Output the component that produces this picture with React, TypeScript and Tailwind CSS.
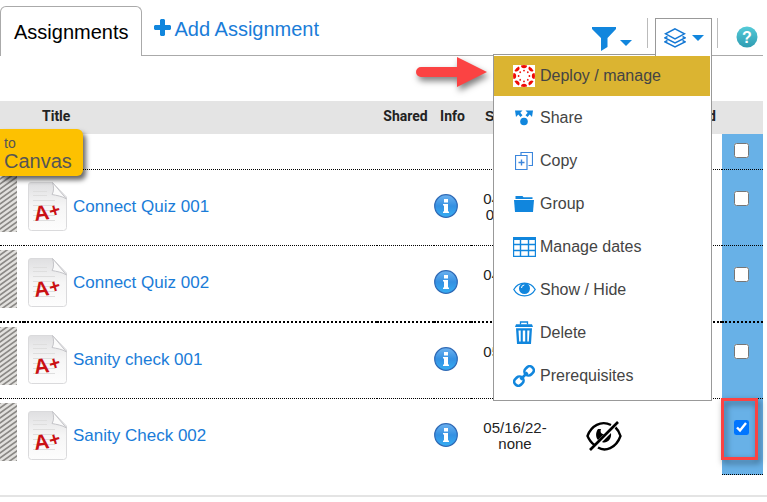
import { useState } from "react";
import type { ReactNode } from "react";

const BLUE = "#1186dd";

function Caret() {
  return (
    <svg className="h-[6px] w-[12px] shrink-0" viewBox="0 0 12 6" aria-hidden="true">
      <path d="M0 0h12L6 6z" fill={BLUE} />
    </svg>
  );
}

function PlusIcon() {
  return (
    <svg className="mb-1 h-[17px] w-[17px]" viewBox="0 0 17 17" aria-hidden="true">
      <path d="M7 0h3l1 1v5h5l1 1v3l-1 1h-5v5l-1 1H7l-1-1v-5H1l-1-1V7l1-1h5V1z" fill={BLUE} />
    </svg>
  );
}

function LayersIcon() {
  return (
    <svg className="h-5 w-[22px]" viewBox="0 0 22 20" fill="none" stroke="#1478d4" strokeWidth="1.5" aria-hidden="true">
      <path d="M11 .8 20.500 5.800 11 10.800 1.500 5.800z" />
      <path d="M3.500 8.500 1 9.800l10 5.200 10-5.200-2.500-1.300" />
      <path d="M3.500 12.500 1 13.800l10 5.200 10-5.200-2.500-1.300" />
    </svg>
  );
}

function HelpIcon() {
  return (
    <svg className="h-[22px] w-[22px]" viewBox="0 0 22 22" aria-hidden="true">
      <defs>
        <linearGradient id="help" x1="0" y1="0" x2="0" y2="1">
          <stop offset="0" stopColor="#55cbd8" />
          <stop offset="1" stopColor="#2f9cb2" />
        </linearGradient>
      </defs>
      <circle cx="11" cy="11" r="10.5" fill="url(#help)" />
      <text x="11" y="16.500" textAnchor="middle" fontSize="16" fontWeight="700" fill="#fff">?</text>
    </svg>
  );
}

function CanvasLogo() {
  const spokes = [0, 45, 90, 135, 180, 225, 270, 315];
  return (
    <svg className="h-[22px] w-[22px]" viewBox="0 0 22 22" aria-hidden="true">
      <path d="M0 0h22v22H0z" fill="#fff" />
      {spokes.map((angle) => (
        <g key={angle} transform={`rotate(${angle} 11 11)`} fill="#f00a05">
          <path d="M8 .500a11 11 0 0 1 6 0 3 2.700 0 0 1-6 0z" />
          <circle cx="11" cy="5.600" r="0.900" />
        </g>
      ))}
    </svg>
  );
}

function ShareIcon() {
  return (
    <svg className="h-4 w-[18px]" viewBox="0 0 18 16" aria-hidden="true">
      <g fill={BLUE}>
        <circle cx="9" cy="11.500" r="3.800" />
        <path d="M0 .5h7.500L5.300 2.700l2.200 2.600-2 1.800-2.200-2.500L1 7z" />
        <path d="M18 .5h-7.500l2.200 2.200-2.200 2.600 2 1.800 2.200-2.500L17 7z" />
      </g>
    </svg>
  );
}

function CopyIcon() {
  return (
    <svg className="h-[18px] w-[18px]" viewBox="0 0 18 18" fill="none" stroke="#3b86dc" aria-hidden="true">
      <path d="M6 3V.5h11.500v13H13.500" strokeWidth="1.200" />
      <path d="M.5 3.500h11.500v14H.5z" strokeWidth="1.200" />
      <path d="M6.500 7.500v6M3.500 10.500h6" strokeWidth="1.400" />
    </svg>
  );
}

function FolderIcon() {
  return (
    <svg className="h-4 w-5" viewBox="0 0 20 16" fill={BLUE} aria-hidden="true">
      <path d="M1.500 0h7l1 1.300h9V3h-17z" />
      <path d="M0 4h20l-1 12H1z" />
    </svg>
  );
}

function GridIcon() {
  return (
    <svg className="h-5 w-[23px]" viewBox="0 0 23 20" aria-hidden="true">
      <path d="M0 0h23v3H0z" fill={BLUE} />
      <path d="M.5.5h22v19H.5zM0 7.500h23M0 13.500h23M7.500 0v20M15.500 0v20" fill="none" stroke={BLUE} strokeWidth="1.400" />
    </svg>
  );
}

function EyeIcon() {
  return (
    <svg className="h-[15px] w-[23px]" viewBox="0 0 23 15" aria-hidden="true">
      <path d="M.8 7.500C5.500-1 17.500-1 22.200 7.500 17.500 16 5.500 16 .8 7.500z" fill="none" stroke={BLUE} strokeWidth="1.300" />
      <circle cx="11.500" cy="6.500" r="5.500" fill={BLUE} />
      <path d="M8.500 6a3 3 0 0 1 2.800-3" fill="none" stroke="#fff" />
    </svg>
  );
}

function TrashIcon() {
  return (
    <svg className="h-[23px] w-[18px]" viewBox="0 0 18 23" aria-hidden="true">
      <path d="M5.500 3.500V1h7v2.500" fill="none" stroke={BLUE} strokeWidth="1.300" />
      <path d="M1 3.200h16L18 6H0zM1 7.300h16L16 23H2z" fill={BLUE} />
      <path d="M3.500 9.500h2.200v11H4.200zM7.800 9.500h2.400v11H7.800zM12.300 9.500h2.200l-.7 11h-1.500z" fill="#fff" />
    </svg>
  );
}

function ChainIcon() {
  return (
    <svg className="h-[22px] w-[22px]" viewBox="0 0 22 22" fill="none" stroke={BLUE} strokeWidth="2.600" aria-hidden="true">
      <g transform="rotate(-45 11 11)">
        <rect x="-1" y="7" width="9.500" height="8" rx="3.600" />
        <rect x="13.500" y="7" width="9.500" height="8" rx="3.600" />
        <path d="M6 11h10" />
      </g>
    </svg>
  );
}

function InfoIcon() {
  return (
    <svg className="h-6 w-6" viewBox="0 0 24 24" aria-hidden="true">
      <defs>
        <linearGradient id="info" x1="0" y1="0" x2="0" y2="1">
          <stop offset="0" stopColor="#6db2f0" />
          <stop offset="0.5" stopColor="#3490e2" />
          <stop offset="1" stopColor="#36aef3" />
        </linearGradient>
      </defs>
      <circle cx="12" cy="12" r="11.300" fill="url(#info)" stroke="#2f69b5" strokeWidth="1.200" />
      <path d="M10 5h4v3.500h-4zM9 10h5v7.500h1V19H9v-1.500h1v-6H9z" fill="#fff" />
    </svg>
  );
}

function Hatch() {
  return (
    <svg className="h-[58px] w-[17px]" aria-hidden="true">
      <defs>
        <pattern id="hatch" width="7" height="5" patternUnits="userSpaceOnUse">
          <path d="M0 0h7v5H0z" fill="#e2e1de" />
          <path d="M-7 10 14-5M-7 5 7-5M0 10 14 0" stroke="#8a8885" strokeWidth="1.700" />
        </pattern>
      </defs>
      <rect width="17" height="58" fill="url(#hatch)" />
    </svg>
  );
}

function GradedPaper() {
  return (
    <svg className="h-[49px] w-[39px] shrink-0" viewBox="0 0 39 49" aria-hidden="true">
      <defs>
        <linearGradient id="paper" x1="0" y1="0" x2="0" y2="1">
          <stop offset="0" stopColor="#dfdfe1" />
          <stop offset="0.5" stopColor="#f6f6f6" />
          <stop offset="1" stopColor="#fdfdfd" />
        </linearGradient>
      </defs>
      <path d="M3 .5h21.500L38.500 15v30.500a3 3 0 0 1-3 3h-32a3 3 0 0 1-3-3V3A2.500 2.500 0 0 1 3 .5z" fill="url(#paper)" stroke="#dadadc" />
      <path d="M24.500.5c1.500 4 1.500 9-.5 12 4.500 1 10 1.500 14.500 4.500z" fill="#fafafa" stroke="#c4c4c8" />
      <path d="M5 9.500h14M5 13.500h14M5 18.500h22M5 23.500h22M5 28.500h22M5 33.500h22M5 38.500h22" stroke="#dedede" />
      <g fill="#ca1113" fontWeight="700" fontFamily="Liberation Sans, Arial, sans-serif">
        <text fontSize="21" transform="translate(7 39) rotate(-8)">A</text>
        <text fontSize="19" transform="translate(23 36) rotate(-16)">+</text>
      </g>
    </svg>
  );
}

function HiddenIcon() {
  return (
    <svg className="h-[30px] w-[36px]" viewBox="0 0 36 30" role="img" aria-label="Hidden">
      <g fill="none" stroke="#000" strokeWidth="2.400">
        <path d="M25 4C15-1 5 5 1.500 15c1.500 3.500 4 7 7 9" />
        <path d="M29.500 6.500c2.500 2.300 4 5 5 8.500C30 27.500 19 31 12 26.500" />
        <path d="M4 29 32 1" strokeWidth="2.600" />
      </g>
      <path d="M12 8c-3 4-2 9 0 11l6-6c-3 0-4-2-3-5zM25 12c1 7-5 11-9 9z" fill="#000" />
    </svg>
  );
}

const menuItems: { label: string; icon: ReactNode }[] = [
  { label: "Share", icon: <ShareIcon /> },
  { label: "Copy", icon: <CopyIcon /> },
  { label: "Group", icon: <FolderIcon /> },
  { label: "Manage dates", icon: <GridIcon /> },
  { label: "Show / Hide", icon: <EyeIcon /> },
  { label: "Delete", icon: <TrashIcon /> },
  { label: "Prerequisites", icon: <ChainIcon /> },
];

const rows = [
  { title: "Connect Quiz 001", start: "04/18/22-", end: "04/29/22", hidden: false, thick: false },
  { title: "Connect Quiz 002", start: "04/18/22-", end: "none", hidden: false, thick: true },
  { title: "Sanity check 001", start: "05/16/22-", end: "none", hidden: false, thick: false },
  { title: "Sanity Check 002", start: "05/16/22-", end: "none", hidden: true, thick: false },
];

function ActionsMenu() {
  return (
    <div className="relative">
      <button
        type="button"
        aria-label="Assignment actions"
        className="relative z-20 flex h-[38px] w-[57px] items-center gap-[6px] border border-b-0 border-[#999] bg-white pl-2"
      >
        <LayersIcon />
        <Caret />
      </button>
      <ul className="absolute right-0 top-9 z-10 w-[219px] border border-[#999] bg-white pb-[3px] pr-px pt-px text-base text-[#444]">
        <li>
          <button type="button" className="flex h-10 w-full items-center gap-1 bg-[#dbb431] pl-[18px]">
            <span className="flex w-6 justify-center"><CanvasLogo /></span>
            Deploy / manage
          </button>
        </li>
        {menuItems.map((item) => (
          <li key={item.label}>
            <button type="button" className="flex h-[43px] w-full items-center gap-1 pl-[18px]">
              <span className="flex w-6 justify-center">{item.icon}</span>
              {item.label}
            </button>
          </li>
        ))}
      </ul>
    </div>
  );
}

function PointerArrow() {
  return (
    <svg className="absolute -left-[77px] top-9 h-10 w-[76px] drop-shadow-[2px_4px_3px_rgba(0,0,0,0.5)]" viewBox="0 0 76 40" aria-hidden="true">
      <path d="M6 13h36V3l30 15-30 15V23H6a5 5 0 0 1 0-10z" fill="#fb4343" />
    </svg>
  );
}

export default function App() {
  const [checked, setChecked] = useState([false, false, false, false, true]);
  const toggle = (index: number) => setChecked(checked.map((value, i) => (i === index ? !value : value)));

  return (
    <div className="overflow-hidden bg-white pr-1 font-['Liberation_Sans',Arial,sans-serif] text-black">
      <header className="flex h-14 items-end border-b border-[#aaa]">
        <nav className="flex items-end">
          <a href="#assignments" className="-mb-px flex h-[50px] items-center rounded-t-md border border-b-0 border-[#aaa] bg-white pl-[13px] pr-3 text-xl">
            Assignments
          </a>
          <a href="#add" className="mb-3 ml-3 flex items-center gap-1 text-xl text-[#1a7cd8]">
            <PlusIcon />
            Add Assignment
          </a>
        </nav>
        <div className="relative -mb-px ml-auto flex items-start">
          <div className="mr-[15px] mt-[9px] h-[28px]">
            <button type="button" aria-label="Filter" className="flex items-end gap-1">
              <svg className="h-6 w-6" viewBox="0 0 24 24" aria-hidden="true">
                <path d="M0 0h24v2l-8.500 9v9L9 24V11L0 2z" fill={BLUE} />
              </svg>
              <span className="pb-[5px]"><Caret /></span>
            </button>
          </div>
          <div className="mr-[7px] h-[30px] w-px bg-[#bbb]" />
          <ActionsMenu />
          <div className="ml-[5px] mr-[18px] h-[30px] w-px bg-[#bbb]" />
          <a href="#help" aria-label="Help" className="mr-[5px] mt-2"><HelpIcon /></a>
          <div className="absolute left-[-100px] top-0 h-0 w-0">
            <PointerArrow />
          </div>
        </div>
      </header>

      <main className="relative mt-[45px]">
        <div className="absolute left-0 top-7 z-10 h-[47px] w-[83px] rounded-r-md bg-[#fdc101] pl-1 pt-1 text-[#555] shadow-[3px_4px_5px_rgba(0,0,0,0.6)]">
          <div className="text-sm leading-5">to</div>
          <div className="text-xl leading-4">Canvas</div>
        </div>
        <table className="w-full table-fixed border-separate border-spacing-0">
          <colgroup>
            <col className="w-6" />
            <col />
            <col className="w-[57px]" />
            <col className="w-[37px]" />
            <col className="w-[88px]" />
            <col className="w-[91px]" />
            <col className="w-[72px]" />
            <col className="w-[41px]" />
          </colgroup>
          <thead>
            <tr className="h-[33px] bg-[#e4e4e4] font-['Roboto',sans-serif] text-sm text-[#222]">
              <th className="p-0" />
              <th className="p-0 pb-1 pl-[18px] text-left">Title</th>
              <th className="p-0 pb-1">Shared</th>
              <th className="p-0 pb-1">Info</th>
              <th className="p-0 pb-1 pl-[14px] text-left font-['Liberation_Sans',Arial,sans-serif]">Start</th>
              <th className="p-0" />
              <th className="p-0 pb-1 pr-[6px] text-right">Assigned</th>
              <th className="p-0" />
            </tr>
          </thead>
          <tbody>
            <tr className="h-9">
              <td colSpan={7} className="border-b border-dotted border-black p-0" />
              <td className="border-b border-dotted border-black bg-[#68b1e7] p-0 pl-3 pt-[9px] align-top">
                <input type="checkbox" aria-label="Select all" className="block h-[15px] w-[15px]" checked={checked[0]} onChange={() => toggle(0)} />
              </td>
            </tr>
            {rows.map((row, index) => {
              const last = index === rows.length - 1;
              const line = last ? "" : row.thick ? "border-b-2 border-dotted border-black" : "border-b border-dotted border-black";
              return (
                <tr key={row.title} className={row.thick ? "h-[77px]" : "h-[76px]"}>
                  <td className={`p-0 pt-1 align-top leading-none ${line}`}>
                    <Hatch />
                  </td>
                  <td className={`p-0 pl-1 pt-3 align-top ${line}`}>
                    <div className="flex gap-[6px]">
                      <GradedPaper />
                      <a href="#assignment" className="pt-[11px] text-[17px] leading-7 text-[#1a7cd8]">{row.title}</a>
                    </div>
                  </td>
                  <td className={`p-0 ${line}`} />
                  <td className={`p-0 pt-6 align-top ${line}`}>
                    <button type="button" aria-label={`About ${row.title}`} className="block"><InfoIcon /></button>
                  </td>
                  <td className={`p-0 pt-[21px] text-center align-top text-[15px] leading-4 text-[#222] ${line}`}>
                    {row.start}
                    <br />
                    {row.end}
                  </td>
                  <td className={`p-0 pl-[27px] pt-[22px] align-top ${line}`}>{row.hidden && <HiddenIcon />}</td>
                  <td className={`p-0 ${line}`} />
                  <td className={`relative bg-[#68b1e7] p-0 pl-3 pt-[21px] align-top ${last ? "border-b border-dotted border-black" : line}`}>
                    <input
                      type="checkbox"
                      aria-label={`Select ${row.title}`}
                      className="block h-[15px] w-[15px]"
                      checked={checked[index + 1]}
                      onChange={() => toggle(index + 1)}
                    />
                    {last && (
                      <div className="pointer-events-none absolute -left-px -top-px h-[62px] w-[37px] border-3 border-[#fb4343] drop-shadow-[2px_3px_3px_rgba(0,0,0,0.5)]" />
                    )}
                  </td>
                </tr>
              );
            })}
          </tbody>
        </table>
      </main>
      <hr className="-mr-1 mt-5 h-[2px] border-0 bg-[#e4e4e4]" />
    </div>
  );
}
